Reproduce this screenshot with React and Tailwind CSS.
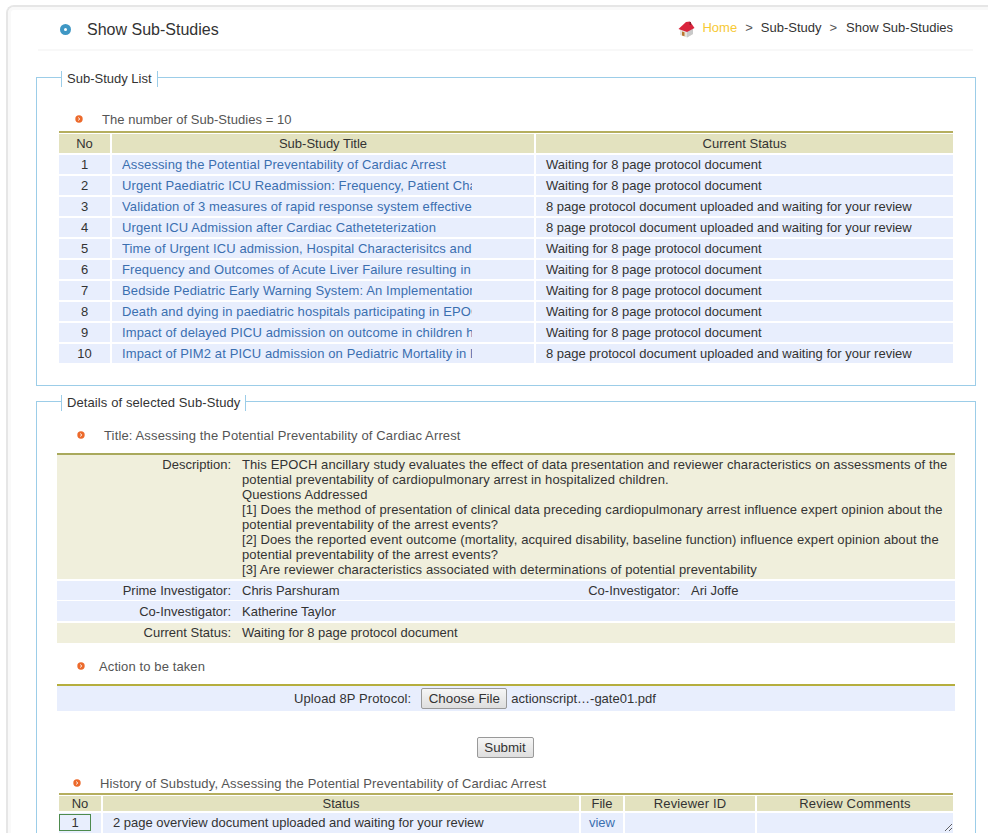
const studies = [
  ['Assessing the Potential Preventability of Cardiac Arrest', 'Waiting for 8 page protocol document'],
  ['Urgent Paediatric ICU Readmission: Frequency, Patient Characteristics and Outcomes', 'Waiting for 8 page protocol document'],
  ['Validation of 3 measures of rapid response system effectiveness', '8 page protocol document uploaded and waiting for your review'],
  ['Urgent ICU Admission after Cardiac Catheteterization', '8 page protocol document uploaded and waiting for your review'],
  ['Time of Urgent ICU admission, Hospital Characterisitcs and Outcomes', 'Waiting for 8 page protocol document'],
  ['Frequency and Outcomes of Acute Liver Failure resulting in ICU Admission', 'Waiting for 8 page protocol document'],
  ['Bedside Pediatric Early Warning System: An Implementation Study', 'Waiting for 8 page protocol document'],
  ['Death and dying in paediatric hospitals participating in EPOCH', 'Waiting for 8 page protocol document'],
  ['Impact of delayed PICU admission on outcome in children hospitalized', 'Waiting for 8 page protocol document'],
  ['Impact of PIM2 at PICU admission on Pediatric Mortality in EPOCH', '8 page protocol document uploaded and waiting for your review'],
];

const Bullet = () => (
  <svg width="8" height="8" viewBox="0 0 8 8" className="shrink-0">
    <circle cx="4" cy="4" r="3.7" fill="#ec6a2c" />
    <path d="M3.2 2.6 L4.8 4 L3.2 5.4" fill="none" stroke="#fff" strokeWidth="1" />
  </svg>
);

const House = () => (
  <svg width="17" height="17" viewBox="0 0 17 17" className="translate-y-[2px]">
    <path d="M2 8 L9 4 L15 8 L15 13 L9 16.5 L2 14 Z" fill="#e6e3dc" />
    <path d="M9 9 L15 8 L15 13 L9 16.5 Z" fill="#c9c9c9" />
    <path d="M0.5 8 L8 1 L12 0.5 L16.5 7 L9 11 Z" fill="#d9243c" />
    <path d="M4 10.5 L6.5 11.3 L6.5 15.3 L4 14.4 Z" fill="#b9782f" />
    <rect x="11.5" y="1" width="1.5" height="3" fill="#8e2030" />
  </svg>
);

// the rule runs a little above the middle of the legend in the reference
const Legend = ({ className, children }) => (
  <legend className={`h-[16px] translate-y-[2px] border-x border-[#9ccde8] px-[5px] leading-[15px] text-[#333] ${className}`}>{children}</legend>
);

const SectionHead = ({ className, gap, children }) => (
  <div className={`flex items-center text-[#555] ${className}`}>
    <Bullet />
    <span className={gap}>{children}</span>
  </div>
);

export default function App() {
  return (
    <div className="h-[833px] overflow-hidden bg-white pl-[6px] pt-[5px] text-[13px] leading-[15px] text-[#333] [font-family:'Liberation_Sans',Arial,sans-serif]">
      <div className="h-[900px] rounded-tl-lg border-l-2 border-t-2 border-[#e6e6e6]">
        <div className="h-full rounded-tl-md border-l-[3px] border-t-[3px] border-[#f9f9f9] bg-white pl-[25px] pr-[12px]">
          <div className="ml-[2px] mr-[3px] flex h-[41px] items-center border-b-2 border-[#f8f8f8] pl-[22px] pr-[20px]">
            <span className="flex h-[11px] w-[11px] items-center justify-center rounded-full bg-[#3f97c4]">
              <span className="h-[3px] w-[3px] rounded-full bg-white" />
            </span>
            <h1 className="ml-[16px] text-[16px] leading-[18px] text-[#333]">Show Sub-Studies</h1>
            <div className="ml-auto flex -translate-y-[2px] items-center">
              <House />
              <span className="ml-[7px] text-[#f7c934]">Home</span>
              <span className="mx-[8px] text-[#555]">&gt;</span>
              <span>Sub-Study</span>
              <span className="ml-[8px] mr-[9px] text-[#555]">&gt;</span>
              <span>Show Sub-Studies</span>
            </div>
          </div>

          <fieldset className="mt-[18px] h-[317px] border border-[#9ccde8] px-[22px]">
            <Legend className="ml-[2px]">Sub-Study List</Legend>
            <SectionHead className="mt-[24px] h-[20px] pl-[16px]" gap="ml-[19px] tracking-[0.04px]">The number of Sub-Studies = 10</SectionHead>
            <table className="mt-[2px] w-[894px] table-fixed border-separate border-spacing-0 border-t-2 border-[#b5ae5e]">
              <thead>
                <tr className="h-[21px]">
                  <th className="w-[51px] border-y border-white bg-[#e3e2bf] font-normal">No</th>
                  <th className="w-[426px] border-x-2 border-y border-white bg-[#e3e2bf] font-normal">Sub-Study Title</th>
                  <th className="border-y border-white bg-[#e3e2bf] font-normal">Current Status</th>
                </tr>
              </thead>
              <tbody>
                {studies.map((s, i) => (
                  <tr key={i} className="h-[21px]">
                    <td className="border-y border-white bg-[#e8eefd] text-center">{i + 1}</td>
                    <td className="border-x-2 border-y border-white bg-[#e8eefd] pl-[10px]">
                      <div className="w-[350px] overflow-hidden whitespace-nowrap tracking-[0.12px] text-[#3b6fb0]">{s[0]}</div>
                    </td>
                    <td className="border-y border-white bg-[#e8eefd] pl-[10px]">{s[1]}</td>
                  </tr>
                ))}
              </tbody>
            </table>
          </fieldset>

          <fieldset className="mt-[7px] h-[600px] border border-[#9ccde8] px-[20px]">
            <Legend className="ml-[4px] tracking-[0.1px]">Details of selected Sub-Study</Legend>
            <SectionHead className="mt-[16px] h-[20px] pl-[20px]" gap="ml-[19px] tracking-[0.14px]">Title: Assessing the Potential Preventability of Cardiac Arrest</SectionHead>
            <div className="mt-[8px] w-[898px] border-t-2 border-[#a9a95c]">
              <div className="flex bg-[#f0efdc] py-[2px]">
                <div className="w-[174px] text-right">Description:</div>
                <div className="ml-[11px] flex-1 pr-[6px] tracking-[0.1px]">
                  This EPOCH ancillary study evaluates the effect of data presentation and reviewer characteristics on assessments of the potential preventability of cardiopulmonary arrest in hospitalized children.<br />
                  Questions Addressed<br />
                  [1] Does the method of presentation of clinical data preceding cardiopulmonary arrest influence expert opinion about the potential preventability of the arrest events?<br />
                  [2] Does the reported event outcome (mortality, acquired disability, baseline function) influence expert opinion about the potential preventability of the arrest events?<br />
                  [3] Are reviewer characteristics associated with determinations of potential preventability
                </div>
              </div>
              <div className="mt-[2px] flex h-[19px] items-center bg-[#e8eefd]">
                <div className="w-[174px] text-right">Prime Investigator:</div>
                <div className="ml-[11px] w-[346px]">Chris Parshuram</div>
                <div className="w-[92px] whitespace-nowrap text-right">Co-Investigator:</div>
                <div className="ml-[11px]">Ari Joffe</div>
              </div>
              <div className="mt-[1px] flex h-[20px] items-center bg-[#e8eefd]">
                <div className="w-[174px] text-right">Co-Investigator:</div>
                <div className="ml-[11px]">Katherine Taylor</div>
              </div>
              <div className="mt-[2px] flex h-[20px] items-center bg-[#f0efdc] pb-[1px]">
                <div className="w-[174px] text-right">Current Status:</div>
                <div className="ml-[11px]">Waiting for 8 page protocol document</div>
              </div>
            </div>

            <SectionHead className="mt-[13px] h-[20px] pl-[20px]" gap="ml-[14px] tracking-[0.11px]">Action to be taken</SectionHead>
            <div className="mt-[8px] flex h-[27px] w-[898px] items-center border-t-2 border-[#b5ae3e] bg-[#e8eefd] pl-[237px]">
              <span className="tracking-[0.1px]">Upload 8P Protocol:</span>
              <button className="ml-[10px] h-[21px] w-[86px] rounded-[2px] border border-[#999] bg-gradient-to-b from-[#f6f6f6] to-[#dedede] text-[13.33px] leading-none">Choose File</button>
              <span className="ml-[4px]">actionscript…-gate01.pdf</span>
            </div>
            <div className="mt-[26px] flex w-[898px] justify-center pr-[2px]">
              <button className="h-[21px] w-[57px] rounded-[2px] border border-[#999] bg-gradient-to-b from-[#f6f6f6] to-[#dedede] text-[13.33px] leading-none">Submit</button>
            </div>

            <SectionHead className="mt-[15px] h-[20px] pl-[16px]" gap="ml-[19px] tracking-[0.14px]">History of Substudy, Assessing the Potential Preventability of Cardiac Arrest</SectionHead>
            <table className="ml-[2px] w-[894px] table-fixed border-separate border-spacing-0 border-t-2 border-[#b5ae5e]">
              <thead>
                <tr className="h-[18px]">
                  <th className="w-[42px] border-b-2 border-t border-white bg-[#e3e2bf] font-normal">No</th>
                  <th className="w-[480px] border-x-2 border-b-2 border-t border-white bg-[#e3e2bf] font-normal">Status</th>
                  <th className="w-[44px] border-r-2 border-b-2 border-t border-white bg-[#e3e2bf] font-normal">File</th>
                  <th className="w-[132px] border-r-2 border-b-2 border-t border-white bg-[#e3e2bf] font-normal tracking-[0.15px]">Reviewer ID</th>
                  <th className="border-b-2 border-t border-white bg-[#e3e2bf] font-normal tracking-[0.15px]">Review Comments</th>
                </tr>
              </thead>
              <tbody>
                <tr className="h-[20px]">
                  <td className="bg-[#e8eefd] pr-[10px] pt-px align-top"><div className="h-[17px] border border-[#4d8a4d] text-center">1</div></td>
                  <td className="border-x-2 border-white bg-[#e8eefd] pl-[10px] pt-[2px] align-top">2 page overview document uploaded and waiting for your review</td>
                  <td className="border-r-2 border-white bg-[#e8eefd] pt-[2px] text-center align-top text-[#3b6fb0]">view</td>
                  <td className="border-r-2 border-white bg-[#e8eefd]"></td>
                  <td className="bg-[#e8eefd] align-top"><textarea readOnly className="block h-[19px] w-full bg-transparent outline-none" /></td>
                </tr>
              </tbody>
            </table>
          </fieldset>
        </div>
      </div>
    </div>
  );
}
